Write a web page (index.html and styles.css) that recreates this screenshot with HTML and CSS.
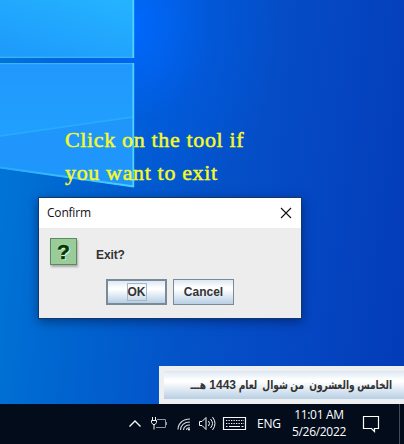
FILE: index.html
```html
<!DOCTYPE html>
<html lang="en">
<head>
<meta charset="utf-8">
<title>Desktop</title>
<link rel="stylesheet" href="styles.css">
</head>
<body>
<div class="screen">
  <main class="desktop">
    <svg class="wallpaper" width="404" height="404" viewBox="0 0 404 404" aria-hidden="true">
      <defs>
        <linearGradient id="top" x1="1" y1="0" x2="0.3" y2="1"><stop offset="0" stop-color="#25b4ff"/><stop offset="1" stop-color="#1e9cfc"/></linearGradient>
        <linearGradient id="mid" x1="0" y1="0" x2="0" y2="1"><stop offset="0" stop-color="#2198fc"/><stop offset="1" stop-color="#20a5ff"/></linearGradient>
        <linearGradient id="low" x1="0" y1="0" x2="0" y2="1"><stop offset="0" stop-color="#2096fb"/><stop offset="1" stop-color="#1f96fc"/></linearGradient>
        <linearGradient id="edge" x1="0" y1="0" x2="1" y2="0"><stop offset="0" stop-color="#27a9fb"/><stop offset="1" stop-color="#4bd0ff"/></linearGradient>
      </defs>
      <path d="M0 0H134V58H0z" fill="url(#top)"/>
      <path d="M0 63H134V187L0 168z" fill="url(#mid)"/>
      <path d="M0 136L134 117V187L0 168z" fill="url(#low)"/>
      <path d="M0 136L133 117" stroke="#27adff" stroke-width="1.5" fill="none"/>
      <path d="M0 57.3H134M0 63.6H134" stroke="#38b4fb" stroke-width="1.2"/>
      <path d="M0 167.500L134 186.500" stroke="url(#edge)" stroke-width="1.8"/>
      <path d="M133.300 0V58M133.300 63V187" stroke="#4fd2fb" stroke-width="1.8"/>
    </svg>
    <p class="caption">Click on the tool if<br>you want to exit</p>

    <section class="dialog" role="dialog" aria-label="Confirm">
      <header class="dialog-title">
        <span class="dialog-name">Confirm</span>
        <svg width="12" height="12" viewBox="0 0 12 12"><path d="M1 1L11 11M11 1L1 11" stroke="#111" stroke-width="1.1"/></svg>
      </header>
      <div class="dialog-message">
        <span class="question">?</span>
        <span class="message">Exit?</span>
      </div>
      <div class="dialog-actions">
        <button class="button button-default"><span class="focus">OK</span></button>
        <button class="button"><span class="cancel">Cancel</span></button>
      </div>
    </section>

    <section class="date-window">
      <div class="date-button" lang="ar" dir="rtl"><span class="words">الخامس والعشرون&nbsp; من شوال&nbsp; لعام</span><span class="year">1443</span><span class="era">هـــ</span></div>
    </section>
  </main>

  <footer class="taskbar">
    <svg class="tray" width="120" height="24" viewBox="0 0 120 24" fill="none" stroke="#f4f6f8">
      <path d="M1.500 14.500L7 9L12.500 14.500" stroke-width="1.400"/>
      <path d="M29 7.500H37.500V15.500H28" stroke="#8e96a0"/><path d="M38.500 10V13" stroke="#8e96a0"/>
      <path d="M24.500 5V8M27.500 5V8M23.500 8.500H28.500V10.500L27 12.500H25L23.500 10.500zM26 12.500V17.500"/>
      <path d="M50 17.500C50 11.500 55 7 62 7M52.500 18C52.500 13.500 56 10 62 10M55.500 18C55.500 15 58 13 62 13M58.500 18C58.500 16.500 60 15.800 62 15.800" stroke-width="1.100" stroke="#d4d9de"/>
      <circle cx="61" cy="17.500" r="1" fill="#fff" stroke="none"/>
      <path d="M71.500 9.500H74L78 5.500V17.500L74 13.500H71.500z"/>
      <path d="M80.500 9Q82.500 11.500 80.500 14M82.500 7Q86.500 11.500 82.500 16M84.500 5Q89.500 11.500 84.500 18"/>
      <path d="M95.500 5.500H117.500V17.500H95.500z" stroke-width="1.200"/>
      <path d="M98 8.500H116M98 11.500H116" stroke-dasharray="1.300 1.200"/><path d="M98 14.500H99.500M101 14.500H112M113.500 14.500H115.500"/>
    </svg>
    <span class="language">ENG</span>
    <div class="clock"><span class="time">11:01 AM</span><span class="day">5/26/2022</span></div>
    <svg class="notes" width="18" height="18" viewBox="0 0 18 18" fill="none" stroke="#fff" stroke-width="1.200"><path d="M1.500 1.500H16.500V13.500H12.500V16.500L9.500 13.500H1.500z"/></svg>
    <span class="show-desktop"></span>
  </footer>
</div>
</body>
</html>
```
FILE: styles.css
```css
* { box-sizing: border-box; }
body { margin: 0; }
.screen {
  width: 404px;
  height: 444px;
  display: flex;
  flex-direction: column;
  overflow: hidden;
  font-family: "Open Sans", "Noto Sans", sans-serif;
}
.desktop {
  position: relative;
  height: 404px;
  background:
    radial-gradient(ellipse 150px 190px at 134px 25px, rgba(0, 104, 255, .95), rgba(0, 92, 235, .45) 50%, transparent),
    linear-gradient(97deg, #0078d8 0%, #0066d0 22%, #0452c8 50%, #0548c4 72%, #043bb7 100%);
}
.wallpaper { display: block; }
.caption {
  position: absolute;
  left: 65px;
  top: 123px;
  margin: 0;
  font: 22px/33px "Liberation Serif", serif;
  letter-spacing: .65px;
  white-space: nowrap;
  color: #f6f928;
  -webkit-text-stroke: .5px #f6f928;
}
.dialog {
  position: absolute;
  left: 38px;
  top: 197px;
  width: 264px;
  height: 122px;
  border: 1px solid #12376c;
  background: #ededed;
  box-shadow: 0 3px 10px rgba(0, 15, 60, .5);
}
.dialog-title {
  height: 30px;
  padding: 0 9px 0 8px;
  display: flex;
  align-items: center;
  justify-content: space-between;
  background: #fff;
  color: #111;
  font-size: 12px;
  letter-spacing: -.2px;
}
.dialog-name { margin-top: -1px; }
.dialog-message {
  height: 51px;
  padding: 10px 0 0 11px;
  display: flex;
  gap: 19px;
}
.question {
  width: 27px;
  height: 27px;
  border: 1px solid #5d8a5d;
  background: #99cc99;
  box-shadow: 1px 2px 2px #aaa;
  color: #003a00;
  font: bold 21px/25px "Liberation Sans", sans-serif;
  text-align: center;
  text-shadow: 0 0 2px #fff, 1px 1px 1px #e8ffe8;
  -webkit-text-stroke: .6px #003a00;
}
.message {
  font: bold 12px/16px "Liberation Sans", sans-serif;
  letter-spacing: -.1px;
  color: #333;
  padding-top: 9px;
}
.dialog-actions {
  display: flex;
  gap: 6px;
  padding-left: 67px;
}
.button {
  width: 61px;
  height: 26px;
  margin: 0;
  padding: 0;
  display: flex;
  align-items: center;
  justify-content: center;
  border: 1px solid #7a8a99;
  background: linear-gradient(#dde8f3 0%, #fff 32%, #fff 38%, #b8cfe5 100%);
  color: #333;
  font: bold 12px/14px "Liberation Sans", sans-serif;
}
.button-default { border-width: 2px; }
.focus { border: 1px solid #a3b8cc; height: 18px; line-height: 17px; }
.date-window {
  position: absolute;
  left: 159px;
  top: 366px;
  width: 245px;
  height: 38px;
  padding: 5px 0 5px 5px;
  background: #eeeff1;
}
.date-button {
  height: 28px;
  padding-right: 12px;
  display: flex;
  background: linear-gradient(#dde8f3 0%, #fff 32%, #fff 38%, #b8cfe5 100%);
  color: #333;
  font: bold 12px/28px "Liberation Sans", "DejaVu Sans", sans-serif;
  white-space: nowrap;
}
.words,
.era {
  transform-origin: right center;
  transform: scaleX(.755);
}
.words { width: 156px; }
.year { width: 27px; }
.era { width: 20px; margin-right: 3px; }
.taskbar {
  height: 40px;
  display: flex;
  align-items: center;
  background: #020c1b;
  color: #fff;
  font-size: 12px;
}
.tray { margin-left: 128px; flex: none; }
.language { margin-left: 9px; width: 24px; margin-top: -1px; letter-spacing: -.2px; }
.clock {
  width: 76px;
  margin-top: -2px;
  display: flex;
  flex-direction: column;
  align-items: center;
  line-height: 17px;
  letter-spacing: -.3px;
}
.notes { margin-left: 5px; }
.show-desktop { margin-left: auto; margin-right: 4px; width: 1px; height: 40px; background: #434b57; }
```
